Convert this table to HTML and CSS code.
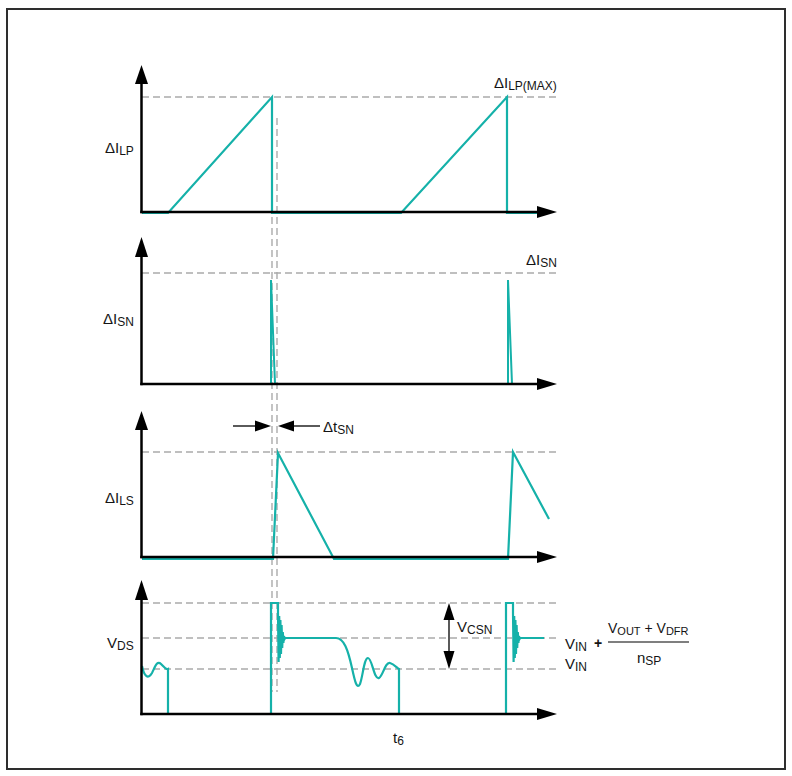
FILE: index.html
```html
<!DOCTYPE html>
<html>
<head>
<meta charset="utf-8">
<link rel="stylesheet" href="styles.css">
</head>
<body>
<div class="frame">
<svg class="diagram" width="776" height="758" viewBox="8 10 776 758" xmlns="http://www.w3.org/2000/svg">
  <!-- shared vertical guides -->
  <line class="dash" x1="272" y1="118" x2="272" y2="692"/>
  <line class="dash" x1="277" y1="118" x2="277" y2="692"/>

  <!-- Panel 1: ΔILP -->
  <line class="dash" x1="142" y1="97" x2="556" y2="97"/>
  <polyline class="teal" points="142,213 168,213 272,97 272,213 401,213 507,97 507,213 537,213"/>
  <line class="axis" x1="141.5" y1="82" x2="141.5" y2="213.2"/>
  <polygon class="head" points="141.5,65 135,84 148,84"/>
  <line class="axis" x1="140.3" y1="212" x2="540" y2="212"/>
  <polygon class="head" points="557,212 537,206 537,218"/>
  <text class="lbl" x="105" y="153">ΔI<tspan class="sub" dy="2">LP</tspan></text>
  <text class="lbl" x="494" y="88">ΔI<tspan class="sub" dy="2">LP(MAX)</tspan></text>

  <!-- Panel 2: ΔISN -->
  <line class="dash" x1="142" y1="273" x2="556" y2="273"/>
  <polyline class="teal thin" points="271,384 271,280 275,384"/>
  <polyline class="teal thin" points="508,384 508,280 512,384"/>
  <line class="axis" x1="141.5" y1="255" x2="141.5" y2="385.2"/>
  <polygon class="head" points="141.5,237 135,257 148,257"/>
  <line class="axis" x1="140.3" y1="384" x2="540" y2="384"/>
  <polygon class="head" points="557,384 537,378 537,390"/>
  <text class="lbl" x="103" y="324">ΔI<tspan class="sub" dy="2">SN</tspan></text>
  <text class="lbl" x="526" y="265">ΔI<tspan class="sub" dy="2">SN</tspan></text>

  <!-- Panel 3: ΔILS -->
  <line class="dash" x1="142" y1="452" x2="556" y2="452"/>
  <polyline class="teal" points="142,559 273,559 278,453 334,559 508,559 513,452 549,519"/>
  <line class="axis" x1="141.5" y1="428" x2="141.5" y2="558.2"/>
  <polygon class="head" points="141.5,411 135,430 148,430"/>
  <line class="axis" x1="140.3" y1="557" x2="540" y2="557"/>
  <polygon class="head" points="557,557 537,551 537,563"/>
  <line class="thinline" x1="233" y1="426" x2="258" y2="426"/>
  <polygon class="head" points="271,426 255,420.5 255,431.5"/>
  <line class="thinline" x1="292" y1="426" x2="320" y2="426"/>
  <polygon class="head" points="278,426 294,420.5 294,431.5"/>
  <text class="lbl" x="323" y="432">Δt<tspan class="sub" dy="2">SN</tspan></text>
  <text class="lbl" x="105" y="503">ΔI<tspan class="sub" dy="2">LS</tspan></text>

  <!-- Panel 4: VDS -->
  <line class="dash" x1="142" y1="603" x2="556" y2="603"/>
  <line class="dash" x1="142" y1="638" x2="556" y2="638"/>
  <line class="dash" x1="142" y1="669" x2="556" y2="669"/>
  <path class="teal" d="M142,666 C144,676 148,680 152,673 C155,667 157,660 161,664 C164,667 166,670 168,669 L168,714"/>
  <path class="teal" d="M271,714 V603 H278 V613 L278.6,662 L279.2,616 L279.8,658 L280.4,620 L281,654 L281.6,625 L282.2,648 L282.8,632 L283.4,643 L284,636 L284.6,639 L285.2,638 H336 C344,638 348,650 352,668 C355,682 357,690 360,684 C363,676 364,658 368,658 C372,658 374,680 379,678 C383,676 385,662 390,663 C394,664 397,668 399,669 V714"/>
  <path class="teal" d="M506,714 V603 H513 V613 L513.6,662 L514.2,616 L514.8,658 L515.4,620 L516,654 L516.6,625 L517.2,648 L517.8,632 L518.4,643 L519,636 L519.6,639 L520.2,638 H544"/>
  <line class="axis" x1="141.5" y1="598" x2="141.5" y2="715.2"/>
  <polygon class="head" points="141.5,580 135,600 148,600"/>
  <line class="axis" x1="140.3" y1="714" x2="540" y2="714"/>
  <polygon class="head" points="557,714 537,708 537,720"/>
  <text class="lbl" x="107" y="648">V<tspan class="sub" dy="2">DS</tspan></text>
  <text class="lbl" x="393" y="743">t<tspan class="sub" dy="2">6</tspan></text>

  <!-- V_CSN dimension arrow -->
  <line class="thinline" x1="449" y1="615" x2="449" y2="657"/>
  <polygon class="head" points="449,603 443.5,620 454.5,620"/>
  <polygon class="head" points="449,669 443.5,651 454.5,651"/>
  <text class="lbl" x="457" y="632">V<tspan class="sub" dy="2">CSN</tspan></text>

  <!-- formula -->
  <text class="lbl" x="565" y="649">V<tspan class="sub" dy="2">IN</tspan></text>
  <text class="lbl plus" x="594" y="648">+</text>
  <text class="lbl num" x="608" y="633">V<tspan class="sub" dy="2">OUT</tspan><tspan dy="-2"> + V</tspan><tspan class="sub" dy="2">DFR</tspan></text>
  <line class="frac" x1="608" y1="642" x2="689" y2="642"/>
  <text class="lbl" x="637" y="663">n<tspan class="sub" dy="2">SP</tspan></text>
  <text class="lbl" x="565" y="669">V<tspan class="sub" dy="2">IN</tspan></text>
</svg>
</div>
</body>
</html>
```

FILE: styles.css
```css
html, body {
  margin: 0;
  padding: 0;
  background: #ffffff;
}

.frame {
  margin: 8px 0 0 6px;
  width: 776px;
  height: 758px;
  border: 2px solid #2e2e2e;
  background: #ffffff;
}

.diagram {
  display: block;
}

.dash {
  stroke: #ababab;
  stroke-width: 1.4;
  stroke-dasharray: 7 4;
  fill: none;
}

.teal {
  stroke: #15b1a9;
  stroke-width: 2.2;
  fill: none;
  stroke-linejoin: miter;
}

.teal.thin {
  stroke-width: 2;
}

.axis {
  stroke: #000000;
  stroke-width: 2.5;
}

.thinline {
  stroke: #000000;
  stroke-width: 1.3;
}

.head {
  fill: #000000;
}

.frac {
  stroke: #555555;
  stroke-width: 1.6;
}

.lbl {
  font-family: "Liberation Sans", Arial, sans-serif;
  font-size: 15px;
  fill: #141414;
}

.lbl.num {
  font-size: 14px;
}

.lbl.plus {
  font-size: 14px;
  font-weight: bold;
}

.sub {
  font-size: 12px;
}

.lbl.num .sub {
  font-size: 11px;
}
```
